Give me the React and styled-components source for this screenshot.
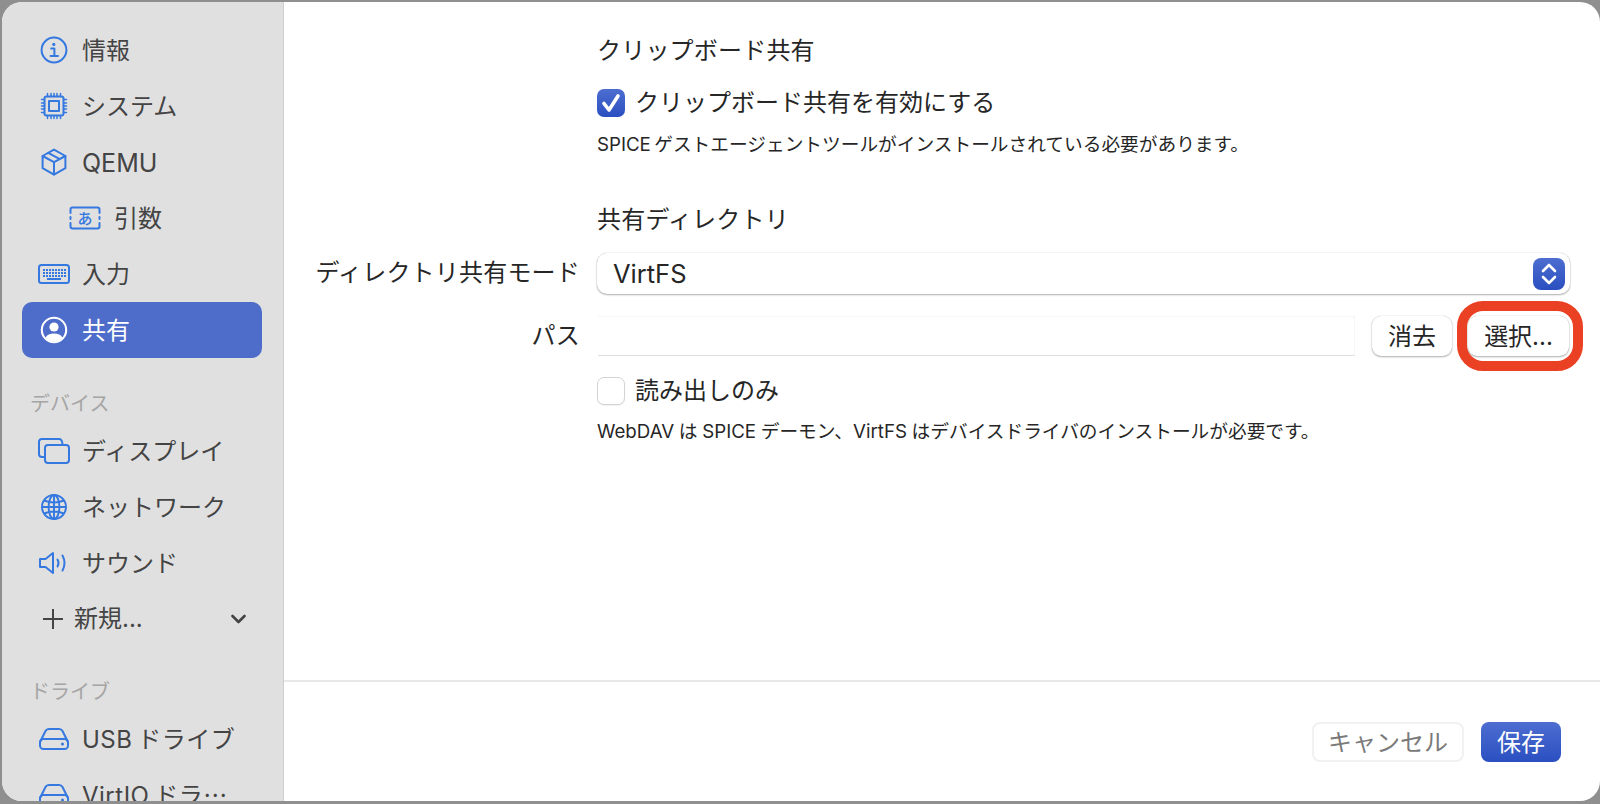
import React from 'react'
import styled, { createGlobalStyle } from 'styled-components'

const GlobalStyle = createGlobalStyle`
  html, body {
    margin: 0;
    padding: 0;
    height: 100%;
    overflow: hidden;
    background: #8f8f8f;
  }
  body {
    font-family: Inter, 'Noto Sans CJK JP', sans-serif;
  }
`

const blue = '#3478e0'

const Svg = ({ w = 28, h = 28, vb = '0 0 28 28', color = blue, children }) => (
  <svg
    width={w}
    height={h}
    viewBox={vb}
    fill="none"
    stroke={color}
    strokeWidth="2"
    strokeLinecap="round"
    strokeLinejoin="round"
  >
    {children}
  </svg>
)

const InfoIcon = () => (
  <Svg>
    <circle cx="14" cy="14" r="12.4" />
    <circle cx="13.8" cy="8.4" r="1.6" fill={blue} stroke="none" />
    <path d="M11.2 12.4H14.4V19.8M10.6 20H18" />
  </Svg>
)

const pins = [7.5, 11, 14, 17, 20.5]

const ChipIcon = () => (
  <Svg>
    <rect x="4.5" y="4.5" width="19" height="19" rx="2" />
    <rect x="9" y="9" width="10" height="10" />
    {pins.map(p => (
      <g key={p}>
        <path d={`M${p} 1.5V4.5M${p} 23.5V26.5M1.5 ${p}H4.5M23.5 ${p}H26.5`} strokeWidth="1.5" />
      </g>
    ))}
  </Svg>
)

const BoxIcon = () => (
  <Svg>
    <path d="M14 1.6L25.4 8V20.2L14 26.6L2.6 20.2V8Z" />
    <path d="M2.6 8L14 14.2L25.4 8M14 14.2V26.6M8.2 4.8L19.8 11.1" />
  </Svg>
)

const TextIcon = () => (
  <svg width="32" height="24" viewBox="0 0 32 24" fill="none" stroke={blue} strokeWidth="2" strokeLinecap="round">
    <path d="M1.5 7V3.5Q1.5 1.5 3.5 1.5H28.5Q30.5 1.5 30.5 3.5V7M1.5 17V20.5Q1.5 22.5 3.5 22.5H28.5Q30.5 22.5 30.5 20.5V17M1.5 11V13M30.5 11V13" />
    <text x="16" y="18" fontSize="15" fontWeight="500" fill={blue} stroke="none" textAnchor="middle" fontFamily="'Noto Sans CJK JP', sans-serif">
      あ
    </text>
  </svg>
)

const keyRows = [6, 9, 12]
const keyCols = [6, 9, 12, 15, 18, 21, 24, 27]

const KeyboardIcon = () => (
  <svg width="32" height="20" viewBox="0 0 32 20" fill="none">
    <rect x="1" y="1" width="30" height="18" rx="2.5" stroke={blue} strokeWidth="2" />
    {keyRows.map(y =>
      keyCols.map(x => <rect key={`${x}-${y}`} x={x - 1} y={y - 1} width="2" height="2" fill={blue} />)
    )}
    <rect x="9" y="14" width="14" height="2" fill={blue} />
  </svg>
)

const UserIcon = () => (
  <svg width="28" height="28" viewBox="0 0 28 28" fill="none">
    <circle cx="14" cy="14" r="12.2" stroke="#fff" strokeWidth="2.1" />
    <circle cx="14" cy="11" r="4.6" fill="#fff" />
    <path d="M5.4 21.8C7 18.6 10 17.4 14 17.4S21 18.6 22.6 21.8C20.4 24.4 17.4 25.6 14 25.6S7.6 24.4 5.4 21.8Z" fill="#fff" />
  </svg>
)

const DisplayIcon = () => (
  <svg width="32" height="26" viewBox="0 0 32 26" fill="none" stroke={blue} strokeWidth="2">
    <path d="M6 19H4Q1 19 1 16V4Q1 1 4 1H21Q24 1 24.5 6" />
    <rect x="7" y="7" width="24" height="18" rx="3" />
  </svg>
)

const GlobeIcon = () => (
  <svg width="26" height="26" viewBox="0 0 26 26" fill="none" stroke={blue} strokeWidth="1.9">
    <circle cx="13" cy="13" r="12" />
    <ellipse cx="13" cy="13" rx="5.4" ry="12" />
    <path d="M13 1V25M3 6.5Q13 10.5 23 6.5M1 13H25M3 19.5Q13 15.5 23 19.5" />
  </svg>
)

const SpeakerIcon = () => (
  <svg width="30" height="24" viewBox="0 0 30 24" fill="none" stroke={blue} strokeWidth="2" strokeLinejoin="round" strokeLinecap="round">
    <path d="M1 8H6.5L14 2V22L6.5 16H1Z" />
    <path d="M18.5 8.5Q20.5 12 18.5 15.5M23.5 4.5Q27.5 12 23.5 19.5" />
  </svg>
)

const PlusIcon = () => (
  <svg width="22" height="22" viewBox="0 0 22 22" fill="none" stroke="#444" strokeWidth="2">
    <path d="M11 1V21M1 11H21" />
  </svg>
)

const ChevronIcon = () => (
  <svg width="15" height="10" viewBox="0 0 15 10" fill="none" stroke="#444" strokeWidth="2.6" strokeLinecap="round" strokeLinejoin="round">
    <path d="M1.5 2L7.5 8L13.5 2" />
  </svg>
)

const DriveIcon = () => (
  <svg width="30" height="22" viewBox="0 0 30 22" fill="none" stroke={blue} strokeWidth="2" strokeLinejoin="round">
    <path d="M1 14L6.5 3Q7.5 1 10 1H20Q22.5 1 23.5 3L29 14" />
    <rect x="1" y="11" width="28" height="10" rx="3.5" />
    <circle cx="23.5" cy="16" r="1.5" fill={blue} stroke="none" />
  </svg>
)

const Window = styled.div`
  display: flex;
  width: 1600px;
  height: 804px;
  box-sizing: border-box;
  padding: 2px 0 3px 2px;
`

const Panel = styled.div`
  display: flex;
  flex: 1;
  min-width: 0;
  overflow: hidden;
  border-radius: 20px;
  background: #fff;
`

const Sidebar = styled.nav`
  width: 282px;
  flex-shrink: 0;
  box-sizing: border-box;
  padding: 20px 21px 0 20px;
  background: #e0e0e0;
  border-right: 1px solid #cfcfcf;
  overflow: hidden;
`

const NavRow = styled.div`
  display: flex;
  align-items: center;
  height: 56px;
  padding-left: ${p => (p.$sub ? 43 : 12)}px;
  border-radius: 10px;
  font-size: 24px;
  white-space: nowrap;
  background: ${p => (p.$active ? '#4e6cc9' : 'transparent')};
  color: ${p => (p.$active ? '#fff' : '#444')};
`

const IconSlot = styled.span`
  display: flex;
  align-items: center;
  justify-content: center;
  width: 40px;
  margin-right: ${p => (p.$sub ? 9 : 8)}px;
  flex-shrink: 0;
`

const NavLabel = styled.span`
  margin-top: ${p => (p.$latin ? 2 : -4)}px;
  font-size: ${p => (p.$latin ? 25 : 24)}px;
  letter-spacing: ${p => (p.$wide ? 0.5 : 0)}px;
`

const NewRow = styled(NavRow)`
  padding-left: 20px;
  padding-right: 16px;
`

const NewLabel = styled.span`
  flex: 1;
  margin: -5px 0 0 10px;
`

const NavHeading = styled.div`
  height: ${p => (p.$tight ? 64 : 65)}px;
  box-sizing: border-box;
  padding: ${p => (p.$tight ? 30 : 31)}px 0 0 8px;
  font-size: 20px;
  line-height: 30px;
  color: #a5a5a5;
`

const Main = styled.main`
  display: flex;
  flex-direction: column;
  flex: 1;
  min-width: 0;
`

const Content = styled.div`
  flex: 1;
  display: grid;
  grid-template-columns: 296px 1fr;
  grid-auto-rows: min-content;
  column-gap: 17px;
  padding: 32px 30px 0 0;
  color: #262626;
  font-size: 24px;
`

const Cell = styled.div`
  grid-column: 2;
  margin-top: ${p => p.$top || 0}px;
`

const Heading = styled(Cell)`
  line-height: 34px;
  height: 34px;
  letter-spacing: 0.2px;
`

const CheckRow = styled(Cell)`
  display: flex;
  align-items: center;
  gap: 10px;
  height: 30px;
  line-height: 30px;
`

const CheckBox = styled.span`
  display: flex;
  align-items: center;
  justify-content: center;
  width: 28px;
  height: 28px;
  box-sizing: border-box;
  border-radius: 7px;
  background: ${p => (p.$on ? 'linear-gradient(#4d6dd0, #2a4fc0)' : '#fff')};
  border: ${p => (p.$on ? 'none' : '1px solid #d4d4d4')};
  box-shadow: ${p => (p.$on ? 'none' : '0 1px 1px rgba(0, 0, 0, 0.06)')};
`

const Help = styled(Cell)`
  font-size: 18.7px;
  line-height: 26px;
  white-space: nowrap;
`

const Label = styled.div`
  grid-column: 1;
  align-self: center;
  text-align: right;
  margin-top: ${p => p.$top || 0}px;
  padding-bottom: ${p => p.$lift || 0}px;
  letter-spacing: 0.2px;
  white-space: nowrap;
`

const Select = styled(Cell)`
  display: flex;
  align-items: center;
  justify-content: space-between;
  height: 41px;
  box-sizing: border-box;
  padding: 0 5px 0 16px;
  background: #fff;
  border-radius: 10px;
  box-shadow: 0 0 1px rgba(0, 0, 0, 0.3), 0 1px 2px rgba(0, 0, 0, 0.3);
  font-size: 25.5px;
`

const Stepper = styled.span`
  display: flex;
  align-items: center;
  justify-content: center;
  width: 32px;
  height: 32px;
  border-radius: 8px;
  background: linear-gradient(#4d6dd0, #2a4fc0);
`

const PathRow = styled(Cell)`
  display: flex;
  align-items: stretch;
  height: 40px;
  padding-right: 1px;
`

const PathField = styled.div`
  flex: 1;
  margin-left: 1px;
  border-top: 1px solid #f6f6f6;
  border-right: 1px solid #f6f6f6;
  border-bottom: 1px solid #dedede;
`

const Button = styled.div`
  display: flex;
  align-items: center;
  justify-content: center;
  box-sizing: border-box;
  width: ${p => p.$w}px;
  padding-bottom: 4px;
  background: #fff;
  border-radius: 9px;
  box-shadow: 0 0 1px rgba(0, 0, 0, 0.3), 0 1px 2px rgba(0, 0, 0, 0.3);
  color: #262626;
  font-size: 24px;
`

const ClearButton = styled(Button)`
  margin-left: 17px;
`

const PickButton = styled(Button)`
  position: relative;
  margin-left: 16px;
`

const Highlight = styled.span`
  position: absolute;
  left: -11px;
  right: -14px;
  top: -15px;
  bottom: -15px;
  border: 10px solid #ea4125;
  border-radius: 26px;
`

const Divider = styled.div`
  height: 2px;
  background: #e8e8e8;
`

const Footer = styled.footer`
  display: flex;
  justify-content: flex-end;
  gap: 17px;
  height: 119px;
  box-sizing: border-box;
  padding: 40px 39px 0 0;
`

const CancelButton = styled.div`
  display: flex;
  align-items: center;
  justify-content: center;
  width: 152px;
  height: 40px;
  box-sizing: border-box;
  padding-bottom: 4px;
  border: 2px solid #f1f1f1;
  border-radius: 8px;
  color: #7a7a7a;
  font-size: 24px;
`

const SaveButton = styled.div`
  display: flex;
  align-items: center;
  justify-content: center;
  width: 80px;
  height: 40px;
  box-sizing: border-box;
  padding-bottom: 4px;
  border-radius: 8px;
  background: linear-gradient(#4d6dd0, #2a4fc0);
  color: #fff;
  font-size: 24px;
`

const topItems = [
  { id: 1, label: '情報', icon: <InfoIcon /> },
  { id: 2, label: 'システム', icon: <ChipIcon /> },
  { id: 3, label: 'QEMU', icon: <BoxIcon />, latin: true },
  { id: 4, label: '引数', icon: <TextIcon />, sub: true },
  { id: 5, label: '入力', icon: <KeyboardIcon /> },
  { id: 6, label: '共有', icon: <UserIcon />, active: true },
]

const deviceItems = [
  { id: 1, label: 'ディスプレイ', icon: <DisplayIcon /> },
  { id: 2, label: 'ネットワーク', icon: <GlobeIcon /> },
  { id: 3, label: 'サウンド', icon: <SpeakerIcon /> },
]

const driveItems = [
  { id: 1, label: 'USB\u2009ドライブ', icon: <DriveIcon />, wide: true },
  { id: 2, label: 'VirtIO\u2009ドラ⋯', icon: <DriveIcon />, wide: true },
]

const renderRow = item => (
  <NavRow key={item.id} $sub={item.sub} $active={item.active}>
    <IconSlot $sub={item.sub}>{item.icon}</IconSlot>
    <NavLabel $latin={item.latin} $wide={item.wide}>{item.label}</NavLabel>
  </NavRow>
)

const App = () => {
  return (
    <>
      <GlobalStyle />
      <Window>
        <Panel>
          <Sidebar>
            {topItems.map(renderRow)}
            <NavHeading>デバイス</NavHeading>
            {deviceItems.map(renderRow)}
            <NewRow>
              <PlusIcon />
              <NewLabel>新規...</NewLabel>
              <ChevronIcon />
            </NewRow>
            <NavHeading $tight>ドライブ</NavHeading>
            {driveItems.map(renderRow)}
          </Sidebar>
          <Main>
            <Content>
              <Heading>クリップボード共有</Heading>
              <CheckRow $top={20}>
                <CheckBox $on>
                  <svg width="22" height="22" viewBox="0 0 22 22" fill="none" stroke="#fff" strokeWidth="3.6" strokeLinecap="round" strokeLinejoin="round">
                    <path d="M4 11.5L9 18L18 4" />
                  </svg>
                </CheckBox>
                クリップボード共有を有効にする
              </CheckRow>
              <Help $top={14}>SPICE{'\u2009'}ゲストエージェントツールがインストールされている必要があります。</Help>
              <Heading $top={45}>共有ディレクトリ</Heading>
              <Label $top={16} $lift={6}>ディレクトリ共有モード</Label>
              <Select $top={16}>
                VirtFS
                <Stepper>
                  <svg width="18" height="24" viewBox="0 0 18 24" fill="none" stroke="#fff" strokeWidth="2.6" strokeLinecap="round" strokeLinejoin="round">
                    <path d="M3 9L9 3L15 9M3 15L9 21L15 15" />
                  </svg>
                </Stepper>
              </Select>
              <Label $top={22} $lift={6}>パス</Label>
              <PathRow $top={22}>
                <PathField />
                <ClearButton $w={80}>消去</ClearButton>
                <PickButton $w={101}>
                  選択...
                  <Highlight />
                </PickButton>
              </PathRow>
              <CheckRow $top={19}>
                <CheckBox />
                読み出しのみ
              </CheckRow>
              <Help $top={13}>WebDAV{'\u2005'}は{'\u2005'}SPICE{'\u2005'}デーモン、VirtFS{'\u2005'}はデバイスドライバのインストールが必要です。</Help>
            </Content>
            <Divider />
            <Footer>
              <CancelButton>キャンセル</CancelButton>
              <SaveButton>保存</SaveButton>
            </Footer>
          </Main>
        </Panel>
      </Window>
    </>
  )
}

export default App
